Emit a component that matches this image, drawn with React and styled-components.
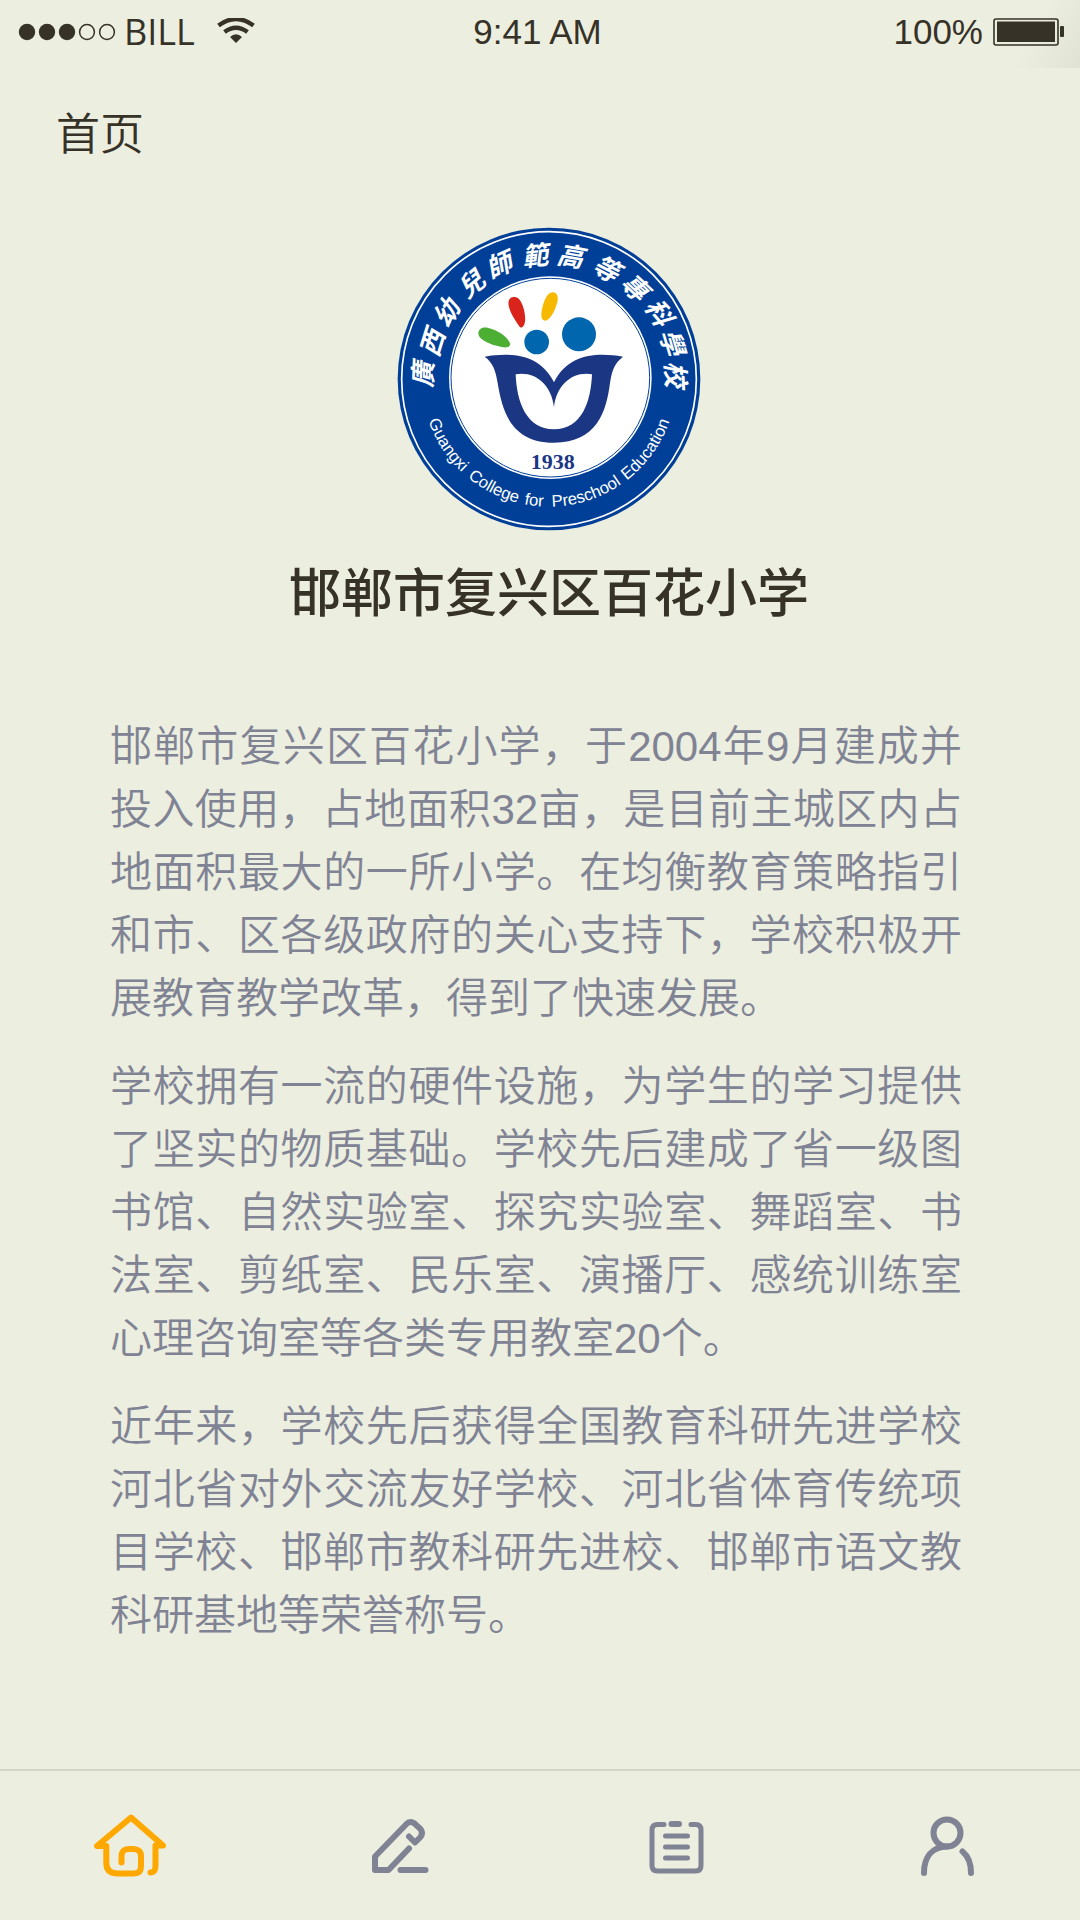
import React from "react";
import styled, { createGlobalStyle } from "styled-components";

const INK = "#363227";
const PAPER = "#eceee0";
const MUTED = "#808394";
const ACCENT = "#ffa800";

const GlobalStyle = createGlobalStyle`
  *, *::before, *::after { box-sizing: border-box; }
  body {
    margin: 0;
    background: ${PAPER};
    color: ${INK};
    font-family: "Liberation Sans", "Noto Sans CJK SC", sans-serif;
  }
`;

const Screen = styled.div`
  min-height: 100vh;
  display: flex;
  flex-direction: column;
`;

const StatusBar = styled.div`
  height: 68px;
  padding: 0 15px 4px 10px;
  display: grid;
  grid-template-columns: 1fr auto 1fr;
  align-items: center;
  font-size: 35px;
  line-height: 40px;
  background: linear-gradient(120deg, transparent 94%, #e0e2d4 100%);
`;

const StatusGroup = styled.div`
  display: flex;
  align-items: center;
  justify-content: ${(p) => (p.$end ? "flex-end" : "flex-start")};
  gap: ${(p) => p.$gap}px;
`;

const Carrier = styled.span`
  font-family: "Open Sans", sans-serif;
  font-size: 36px;
  margin-right: 14px;
`;

const Header = styled.header`
  padding: 35px 56px 28px;
`;

const PageName = styled.h1`
  margin: 0;
  font-size: 44px;
  line-height: 64px;
  font-weight: 350;
`;

const Main = styled.main`
  flex: 1;
`;

const Hero = styled.section`
  padding: 32px 0 0 18px;
  display: flex;
  flex-direction: column;
  align-items: center;
  gap: 24px;
`;

const SchoolName = styled.h2`
  margin: 0;
  font-size: 52px;
  line-height: 78px;
  font-weight: 500;
`;

const Article = styled.article`
  padding: 82px 118px 60px 110px;
  display: flex;
  flex-direction: column;
  gap: 25px;
`;

const Paragraph = styled.p`
  margin: 0;
  color: ${MUTED};
  font-size: 42px;
  line-height: 63px;
  font-weight: 350;
  text-align: justify;
`;

const TabBar = styled.nav`
  height: 151px;
  padding: 6px 97px 0 94px;
  border-top: 2px solid #d3d5c8;
  display: flex;
  align-items: center;
  justify-content: space-between;
`;

const Tab = styled.a`
  display: flex;
  color: ${(p) => (p.$active ? ACCENT : MUTED)};
`;

const TabIcon = styled.svg`
  width: 72px;
  height: 72px;
  fill: none;
  stroke: currentColor;
  stroke-width: ${(p) => p.$weight}px;
  stroke-linecap: round;
  stroke-linejoin: round;
`;

const LogoSvg = styled.svg`
  display: block;
  width: 304px;
  height: 304px;
`;

const BrushText = styled.text`
  font-family: "Noto Sans CJK TC", sans-serif;
  font-size: 78px;
  font-style: italic;
  font-weight: 700;
  fill: #fff;
  text-anchor: middle;
`;

const ArcText = styled.text`
  font-family: "Liberation Sans", sans-serif;
  font-size: 50px;
  fill: #fff;
  text-anchor: middle;
`;

const YearText = styled.text`
  font-family: "Liberation Serif", serif;
  font-size: 66px;
  font-weight: 700;
  fill: #1b3683;
  text-anchor: middle;
`;

const brushGlyphs = [
  ["廣", 98, 465], ["西", 126, 370], ["幼", 168, 280], ["兒", 242, 193],
  ["師", 326, 137], ["範", 434, 108], ["高", 540, 110], ["等", 647, 148],
  ["專", 733, 203], ["科", 805, 278], ["學", 845, 368], ["校", 855, 464],
];

// Degrees are measured from the bottom of the ring; negative is to the left.
const arcWords = [
  ["Guangxi", -57], ["College", -27], ["for", -7], ["Preschool", 18], ["Education", 54],
];

const CX = 476;
const CY = 478;
const ARC_R = 383;

function Logo() {
  return (
    <LogoSvg viewBox="20 22 912 912" role="img">
      <circle cx={CX} cy={CY} r="454" fill="#003f98" />
      <circle cx={CX} cy={CY} r="442" fill="none" stroke="#fff" strokeWidth="5" />
      <circle cx="480" cy="474" r="304" fill="#fff" />
      <circle cx="480" cy="474" r="298" fill="none" stroke="#003f98" strokeWidth="3" />
      {brushGlyphs.map(([glyph, x, y]) => {
        const turn = (Math.atan2(x - CX, CY - y) * 180) / Math.PI;
        return (
          <BrushText key={glyph} transform={`translate(${x} ${y}) rotate(${turn})`} y="28">
            {glyph}
          </BrushText>
        );
      })}
      <path id="ring" fill="none" d={`M${CX - ARC_R} ${CY}A${ARC_R} ${ARC_R} 0 0 0 ${CX + ARC_R} ${CY}`} />
      {arcWords.map(([word, deg]) => (
        <ArcText key={word}>
          <textPath href="#ring" startOffset={(ARC_R * (90 + deg) * Math.PI) / 180}>
            {word}
          </textPath>
        </ArcText>
      ))}
      <path fill="#4dae34" d="M264 341C265 327 278 321 294 325C323 331 354 353 360 373C359 381 351 384 340 383C311 379 264 363 264 341Z" />
      <path fill="#d9241c" d="M355 245C357 231 375 228 386 238C400 254 408 291 403 311C400 321 394 328 388 321C375 304 350 266 355 245Z" />
      <path fill="#f7b800" d="M489 218C503 220 505 237 499 254C493 276 478 303 464 303C451 301 452 286 455 269C460 246 470 216 489 218Z" />
      <circle cx="439" cy="367" r="37" fill="#0066ad" />
      <circle cx="566" cy="344" r="51" fill="#0066ad" />
      <path
        fill="#1b3683"
        fillRule="evenodd"
        d="M283 411C360 398 447 401 491 488C534 401 621 398 698 411C671 432 665 453 659 490C648 575 620 669 491 669C362 669 336 575 322 490C316 453 308 429 283 411ZM376 464C379 545 407 629 491 629C575 629 602 545 605 464C548 454 499 494 491 562C483 494 434 454 376 464Z"
      />
      <YearText x="487" y="749">1938</YearText>
    </LogoSvg>
  );
}

function Signal() {
  return (
    <svg width="106" height="18" viewBox="-8 0 106 18">
      {[0, 1, 2, 3, 4].map((i) => (
        <circle
          key={i}
          cx={9 + i * 20}
          cy="9"
          r={i < 3 ? 8.2 : 7.4}
          fill={i < 3 ? INK : "none"}
          stroke={i < 3 ? "none" : INK}
          strokeWidth="1.5"
        />
      ))}
    </svg>
  );
}

function Wifi() {
  return (
    <svg width="38" height="28" viewBox="0 0 38 28" fill="none" stroke={INK} strokeWidth="4.4">
      <path d="M1.500 7.500Q19 -5.500 36.500 7.500" />
      <path d="M7.500 14Q19 5.500 30.500 14" />
      <path d="M19 25L13 19Q19 13.500 25 19Z" fill={INK} stroke="none" />
    </svg>
  );
}

function Battery() {
  return (
    <svg width="72" height="28" viewBox="0 0 72 28">
      <rect x="1" y="1" width="64" height="26" rx="2" fill="none" stroke={INK} strokeWidth="1.6" />
      <rect x="4" y="3.500" width="58" height="20.500" fill={INK} />
      <rect x="67" y="8" width="4" height="11" rx="1" fill={INK} />
    </svg>
  );
}

const tabs = [
  {
    label: "首页",
    active: true,
    weight: 6,
    drawing: (
      <path d="M56.500 59.500C60.500 59.500 61.500 57 61.500 52V32.500H69L37 4.500 3 33H12.300V50C12.300 57 16 60.500 24 60.500H40C45 60.500 47 58 47 53V43C47 38.500 44 36 39.500 36H34.500C30 36 27.500 38.500 27.500 43V49.500" />
    ),
  },
  {
    label: "编辑",
    weight: 6,
    drawing: (
      <>
        <path d="M43 23.500 49 29.500 54.500 24Q57.500 20 54.500 16L48.500 10.500Q44.500 7.500 41 10.500L9 43.500V57H22.500L43 35.500" />
        <path d="M34.500 57H59.500" />
      </>
    ),
  },
  {
    label: "记录",
    weight: 5,
    drawing: (
      <>
        <path d="M25 11.500H18.500Q13 11.500 13 17V52.500Q13 58 18.500 58H56.500Q62 58 62 52.500V17Q62 11.500 56.500 11.500H52" />
        <path d="M32.500 11H40" strokeWidth="6" />
        <path d="M26.500 23H48.500M26.500 34H48.500M26.500 45H48.500" />
      </>
    ),
  },
  {
    label: "我的",
    weight: 6,
    drawing: (
      <>
        <circle cx="36" cy="20" r="13.500" />
        <path d="M36 33.500C21 34 13 44 13 60" />
        <path d="M51.500 38.500C57 43 60 49.500 60 60" />
      </>
    ),
  },
];

const paragraphs = [
  "邯郸市复兴区百花小学，于2004年9月建成并投入使用，占地面积32亩，是目前主城区内占地面积最大的一所小学。在均衡教育策略指引和市、区各级政府的关心支持下，学校积极开展教育教学改革，得到了快速发展。",
  "学校拥有一流的硬件设施，为学生的学习提供了坚实的物质基础。学校先后建成了省一级图书馆、自然实验室、探究实验室、舞蹈室、书法室、剪纸室、民乐室、演播厅、感统训练室心理咨询室等各类专用教室20个。",
  "近年来，学校先后获得全国教育科研先进学校河北省对外交流友好学校、河北省体育传统项目学校、邯郸市教科研先进校、邯郸市语文教科研基地等荣誉称号。",
];

export default function App() {
  return (
    <Screen lang="zh-CN">
      <GlobalStyle />
      <StatusBar>
        <StatusGroup $gap={8}>
          <Signal />
          <Carrier>BILL</Carrier>
          <Wifi />
        </StatusGroup>
        <span>9:41 AM</span>
        <StatusGroup $end $gap={10}>
          <span>100%</span>
          <Battery />
        </StatusGroup>
      </StatusBar>
      <Header>
        <PageName>首页</PageName>
      </Header>
      <Main>
        <Hero>
          <Logo />
          <SchoolName>邯郸市复兴区百花小学</SchoolName>
        </Hero>
        <Article>
          {paragraphs.map((text) => (
            <Paragraph key={text}>{text}</Paragraph>
          ))}
        </Article>
      </Main>
      <TabBar>
        {tabs.map((tab) => (
          <Tab key={tab.label} href="#" aria-label={tab.label} $active={tab.active}>
            <TabIcon viewBox="0 0 72 72" $weight={tab.weight}>
              {tab.drawing}
            </TabIcon>
          </Tab>
        ))}
      </TabBar>
    </Screen>
  );
}
